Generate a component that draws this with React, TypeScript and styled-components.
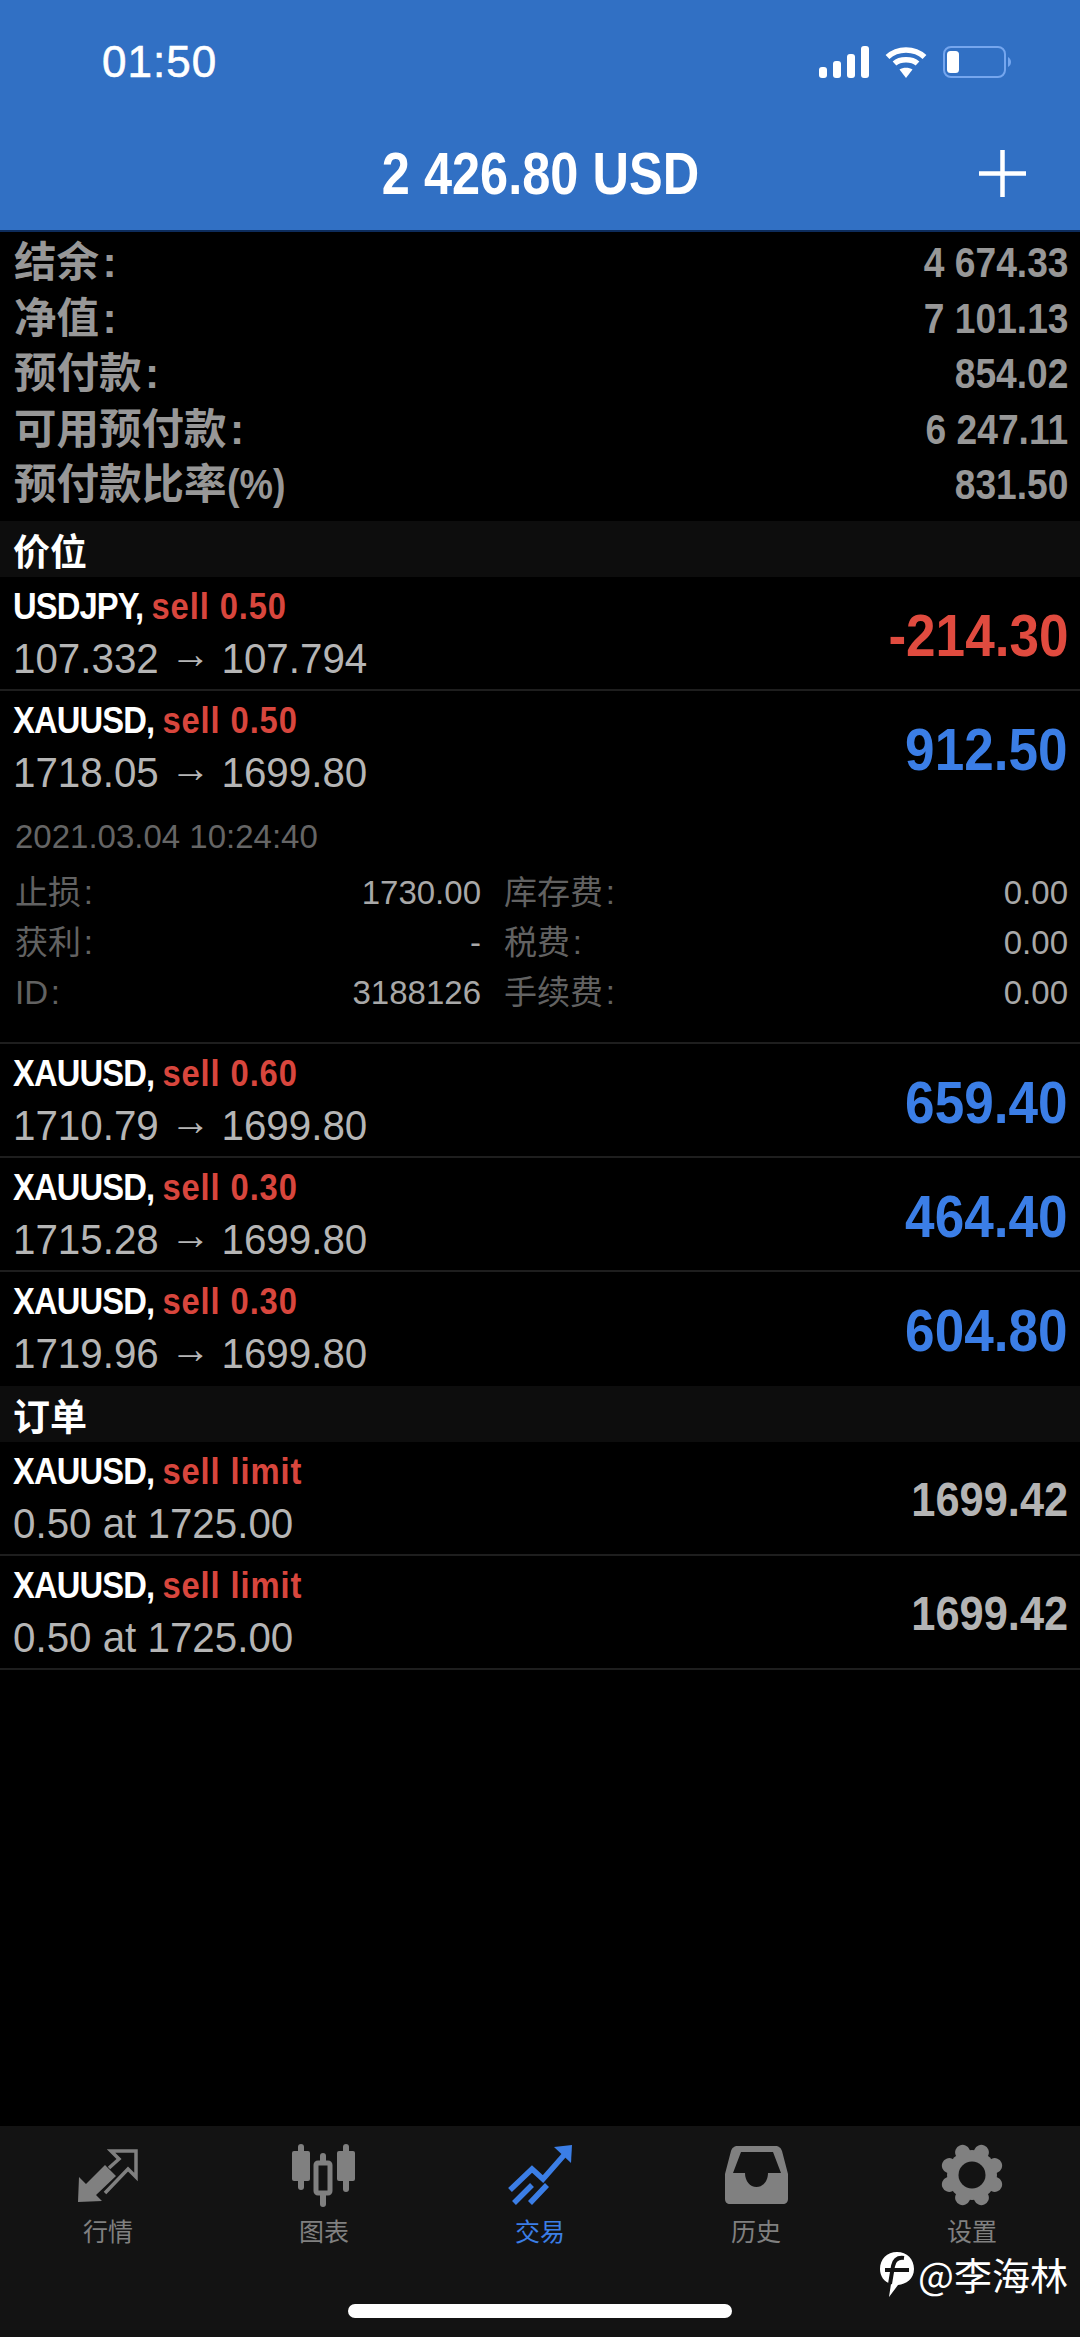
import * as React from 'react';
import styled, { createGlobalStyle } from 'styled-components';

const SANS = `'Liberation Sans', 'Noto Sans CJK SC', sans-serif`;
const CJK = `'Noto Sans CJK SC', sans-serif`;

const balances = [
  { label: '结余\u200A:', value: '4 674.33' },
  { label: '净值\u200A:', value: '7 101.13' },
  { label: '预付款\u200A:', value: '854.02' },
  { label: '可用预付款\u200A:', value: '6 247.11' },
  { label: '预付款比率', unit: '(%)', value: '831.50' },
];

const positions = [
  { symbol: 'USDJPY,', side: 'sell 0.50', from: '107.332', to: '107.794', value: '-214.30', tone: 'red', open: false },
  { symbol: 'XAUUSD,', side: 'sell 0.50', from: '1718.05', to: '1699.80', value: '912.50', tone: 'blue', open: true },
  { symbol: 'XAUUSD,', side: 'sell 0.60', from: '1710.79', to: '1699.80', value: '659.40', tone: 'blue', open: false },
  { symbol: 'XAUUSD,', side: 'sell 0.30', from: '1715.28', to: '1699.80', value: '464.40', tone: 'blue', open: false },
  { symbol: 'XAUUSD,', side: 'sell 0.30', from: '1719.96', to: '1699.80', value: '604.80', tone: 'blue', open: false },
];

const details = [
  ['止损\u200A:', '1730.00', '库存费\u200A:', '0.00'],
  ['获利\u200A:', '-', '税费\u200A:', '0.00'],
  ['ID\u200A:', '3188126', '手续费\u200A:', '0.00'],
];

const toneColors: Record<string, string> = {
  red: '#e04b3f',
  blue: '#3b7ee6',
  grey: '#b4b4b4',
};

const GlobalStyle = createGlobalStyle`
  html, body {
    margin: 0;
    padding: 0;
    background: #000;
  }
  * {
    box-sizing: border-box;
  }
`;

const Screen = styled.div`
  position: relative;
  display: flex;
  flex-direction: column;
  width: 1080px;
  height: 2337px;
  overflow: hidden;
  background: #000;
  font-family: ${SANS};
`;

const Header = styled.header`
  height: 232px;
  flex-shrink: 0;
  background: #3170c4;
  border-bottom: 2px solid #0d2c5c;
`;

const StatusBar = styled.div`
  display: flex;
  align-items: center;
  justify-content: space-between;
  height: 124px;
  padding: 0 69px 0 102px;
  color: #fff;
`;

const Clock = styled.span`
  font-size: 44px;
  letter-spacing: 1px;
  -webkit-text-stroke: 0.6px #fff;
`;

const StatusIcons = styled.div`
  display: flex;
  align-items: center;
  gap: 16px;
`;

const NavBar = styled.div`
  display: grid;
  grid-template-columns: 1fr auto 1fr;
  align-items: center;
  height: 106px;
  padding: 0 54px 7px;
  color: #fff;
`;

const NavTitle = styled.h1`
  grid-column: 2;
  margin: 0;
  font-size: 60px;
  font-weight: 700;
  white-space: nowrap;
  transform: scaleX(0.842);
`;

const NavAction = styled.div`
  justify-self: end;
  display: flex;
`;

const Content = styled.main`
  flex: 1;
`;

const BalanceList = styled.div`
  padding: 3px 12px 8px 14px;
`;

const BalanceRow = styled.div`
  display: flex;
  align-items: center;
  justify-content: space-between;
  height: 55.5px;
  line-height: 57px;
  color: #979797;
  font-weight: 700;
`;

const BalanceLabel = styled.span`
  font-size: 42.5px;
`;

const Unit = styled.span`
  display: inline-block;
  transform: scaleX(0.885);
  transform-origin: left center;
`;

const BalanceValue = styled.span`
  font-size: 42px;
  white-space: nowrap;
  transform: scaleX(0.885);
  transform-origin: right center;
`;

const SectionTitle = styled.div`
  display: flex;
  align-items: center;
  height: 56px;
  padding: 3px 0 0 13px;
  background: #0d0d0d;
  color: #fff;
  font-size: 37px;
  font-weight: 700;
`;

const Item = styled.div<{ $plain?: boolean }>`
  border-bottom: 2px solid ${p => (p.$plain ? 'transparent' : '#1e1e1e')};
`;

const ItemMain = styled.div`
  display: flex;
  align-items: center;
  justify-content: space-between;
  height: 112px;
  padding: 2px 12px 0 13px;
`;

const ItemText = styled.div`
  display: flex;
  flex-direction: column;
`;

const ItemTitle = styled.div`
  height: 52px;
  line-height: 54px;
  font-size: 37px;
  font-weight: 700;
  letter-spacing: -1px;
  color: #fff;
  white-space: nowrap;
  transform: scaleX(0.885);
  transform-origin: left center;
`;

const Side = styled.span`
  letter-spacing: 1px;
  color: #d8463d;
`;

const ItemPrice = styled.div`
  height: 56px;
  line-height: 54px;
  font-size: 42px;
  color: #b5b5b5;
  white-space: nowrap;
  transform: scaleX(0.96);
  transform-origin: left center;
`;

const Arrow = styled.span`
  line-height: 0;
  vertical-align: 5px;
`;

const ItemValue = styled.div<{ $tone: string; $size: number; $drop?: number }>`
  padding-top: ${p => p.$drop || 0}px;
  font-size: ${p => p.$size}px;
  font-weight: 700;
  color: ${p => toneColors[p.$tone]};
  white-space: nowrap;
  transform: scaleX(0.885);
  transform-origin: right center;
`;

const Detail = styled.div`
  padding: 0 12px 25px 15px;
`;

const DetailDate = styled.div`
  height: 64px;
  line-height: 68px;
  font-size: 33px;
  color: #656565;
`;

const DetailRow = styled.div`
  display: grid;
  grid-template-columns: 466px 1fr;
  column-gap: 23px;
  height: 50px;
  line-height: 52px;
  font-size: 33px;
`;

const DetailPair = styled.div`
  display: flex;
  justify-content: space-between;
`;

const DetailLabel = styled.span`
  color: #626262;
`;

const DetailValue = styled.span`
  color: #a8a8a8;
`;

const TabBar = styled.nav`
  flex-shrink: 0;
  height: 211px;
  padding-top: 17px;
  background: #131313;
`;

const Tabs = styled.div`
  display: grid;
  grid-template-columns: repeat(5, 1fr);
`;

const Tab = styled.div<{ $active?: boolean }>`
  display: flex;
  flex-direction: column;
  align-items: center;
  color: ${p => (p.$active ? '#3b7ee6' : '#808080')};
`;

const TabIcon = styled.div`
  display: flex;
  align-items: center;
  justify-content: center;
  height: 64px;
`;

const TabLabel = styled.span`
  margin-top: 8px;
  line-height: 30px;
  font-family: ${CJK};
  font-size: 25px;
`;

const HomeIndicator = styled.div`
  width: 384px;
  height: 14px;
  margin: 59px auto 0;
  border-radius: 7px;
  background: #fff;
`;

const Watermark = styled.div`
  position: absolute;
  right: 12px;
  bottom: 40px;
  display: flex;
  align-items: center;
  gap: 3px;
  color: #fff;
  font-family: ${CJK};
  font-size: 38px;
  line-height: 46px;
`;

const SignalIcon = () => (
  <svg width="50" height="32" viewBox="0 0 50 32" fill="#fff">
    <rect x="0" y="21" width="8" height="11" rx="3" />
    <rect x="14" y="15" width="8" height="17" rx="3" />
    <rect x="28" y="8" width="8" height="24" rx="3" />
    <rect x="42" y="0" width="8" height="32" rx="3" />
  </svg>
);

const WifiIcon = () => (
  <svg width="42" height="32" viewBox="0 0 42 32" fill="none" stroke="#fff" strokeWidth="5.5">
    <path d="M2.5 11 C12.5 1.5 29.5 1.5 39.5 11" />
    <path d="M9.5 17.5 C15 12.5 27 12.5 32.5 17.5" />
    <path d="M21 32 L14.5 23.5 C18 21 24 21 27.5 23.5 Z" fill="#fff" stroke="none" />
  </svg>
);

const BatteryIcon = () => (
  <svg width="68" height="32" viewBox="0 0 68 32" fill="none">
    <rect x="1" y="1" width="61" height="30" rx="7" stroke="#75a6ee" strokeWidth="2" />
    <rect x="4" y="5" width="12" height="22" rx="3.5" fill="#fff" />
    <path d="M65 11 C67 12 68 14 68 16 C68 18 67 20 65 21 Z" fill="#75a6ee" />
  </svg>
);

const PlusIcon = () => (
  <svg width="47" height="47" viewBox="0 0 47 47" stroke="#fff" strokeWidth="4.5">
    <path d="M23.5 0 V47 M0 23.5 H47" />
  </svg>
);

const QuotesIcon = () => (
  <svg width="60" height="54" viewBox="0 0 60 54" fill="#808080">
    <path d="M0 54 L1 29 L8 36 L27 17 L38 28 L18 47 L24 53 Z" />
    <path d="M31 20 L41 11 L33 3 H58 V29 L50 21 L27 45" fill="none" stroke="#808080" strokeWidth="3.5" />
  </svg>
);

const ChartIcon = () => (
  <svg width="66" height="63" viewBox="0 0 66 63" fill="#808080">
    <rect x="7" y="0" width="6" height="46" rx="3" />
    <rect x="1" y="7" width="18" height="30" rx="2" />
    <rect x="29" y="9" width="6" height="54" rx="3" />
    <rect x="25" y="19" width="14" height="30" rx="2" fill="#131313" stroke="#808080" strokeWidth="5" />
    <rect x="52" y="0" width="6" height="48" rx="3" />
    <rect x="46" y="7" width="18" height="30" rx="2" />
  </svg>
);

const TradeIcon = () => (
  <svg width="64" height="60" viewBox="0 0 64 60" fill="none" stroke="#3b7ee6" strokeWidth="5.5">
    <path d="M2 45 L24 24 L35 34 L57 9" />
    <path d="M46 2 L64 0 L63 18 Z" fill="#3b7ee6" stroke="none" />
    <path d="M6 58 L24 40 M22 58 L39 40" />
  </svg>
);

const HistoryIcon = () => (
  <svg width="63" height="58" viewBox="0 0 63 58">
    <path
      fillRule="evenodd"
      fill="#808080"
      d="M13 0 H50 C54 0 56 2 57 5 L63 28 V53 C63 56 61 58 58 58 H5 C2 58 0 56 0 53 V28 L6 5 C7 2 9 0 13 0 Z M16 6 L8 27 H20 C20 35 25 41 31.5 41 C38 41 43 35 43 27 H56 L48 6 Z"
    />
  </svg>
);

const SettingsIcon = () => (
  <svg width="64" height="64" viewBox="0 0 64 64" fill="#808080">
    <circle cx="32" cy="32" r="25" />
    {[0, 45, 90, 135, 180, 225, 270, 315].map(angle => (
      <circle key={angle} cx="32" cy="7.5" r="7.5" transform={`rotate(${angle + 22.5} 32 32)`} />
    ))}
    <circle cx="32" cy="32" r="13.5" fill="#131313" />
  </svg>
);

const LogoIcon = () => (
  <svg width="36" height="46" viewBox="0 0 36 46">
    <path d="M18 1 C28 1 35 8 35 18 C35 28 27 33 19 34 L10 46 L12 33 C5 31 1 25 1 18 C1 8 8 1 18 1 Z" fill="#fff" />
    <path d="M25 7 C18 6 15 10 14 15 L11 33 M6 19 H30" fill="none" stroke="#131313" strokeWidth="4" />
  </svg>
);

const tabs = [
  { label: '行情', icon: <QuotesIcon /> },
  { label: '图表', icon: <ChartIcon /> },
  { label: '交易', icon: <TradeIcon />, active: true },
  { label: '历史', icon: <HistoryIcon /> },
  { label: '设置', icon: <SettingsIcon /> },
];

export default function App() {
  return (
    <Screen>
      <GlobalStyle />
      <Header>
        <StatusBar>
          <Clock>01:50</Clock>
          <StatusIcons>
            <SignalIcon />
            <WifiIcon />
            <BatteryIcon />
          </StatusIcons>
        </StatusBar>
        <NavBar>
          <NavTitle>2 426.80 USD</NavTitle>
          <NavAction>
            <PlusIcon />
          </NavAction>
        </NavBar>
      </Header>

      <Content>
        <BalanceList>
          {balances.map(row => (
            <BalanceRow key={row.label}>
              <BalanceLabel>
                {row.label}
                {row.unit && <Unit>{row.unit}</Unit>}
              </BalanceLabel>
              <BalanceValue>{row.value}</BalanceValue>
            </BalanceRow>
          ))}
        </BalanceList>

        <SectionTitle>价位</SectionTitle>
        {positions.map((pos, i) => (
          <Item key={pos.from} $plain={i === positions.length - 1}>
            <ItemMain>
              <ItemText>
                <ItemTitle>
                  {pos.symbol} <Side>{pos.side}</Side>
                </ItemTitle>
                <ItemPrice>
                  {pos.from} <Arrow>→</Arrow> {pos.to}
                </ItemPrice>
              </ItemText>
              <ItemValue $tone={pos.tone} $size={60} $drop={3}>
                {pos.value}
              </ItemValue>
            </ItemMain>
            {pos.open && (
              <Detail>
                <DetailDate>2021.03.04 10:24:40</DetailDate>
                {details.map(row => (
                  <DetailRow key={row[0]}>
                    <DetailPair>
                      <DetailLabel>{row[0]}</DetailLabel>
                      <DetailValue>{row[1]}</DetailValue>
                    </DetailPair>
                    <DetailPair>
                      <DetailLabel>{row[2]}</DetailLabel>
                      <DetailValue>{row[3]}</DetailValue>
                    </DetailPair>
                  </DetailRow>
                ))}
              </Detail>
            )}
          </Item>
        ))}

        <SectionTitle>订单</SectionTitle>
        {[0, 1].map(i => (
          <Item key={i}>
            <ItemMain>
              <ItemText>
                <ItemTitle>
                  XAUUSD, <Side>sell limit</Side>
                </ItemTitle>
                <ItemPrice>0.50 at 1725.00</ItemPrice>
              </ItemText>
              <ItemValue $tone="grey" $size={49}>
                1699.42
              </ItemValue>
            </ItemMain>
          </Item>
        ))}
      </Content>

      <TabBar>
        <Tabs>
          {tabs.map(tab => (
            <Tab key={tab.label} $active={tab.active}>
              <TabIcon>{tab.icon}</TabIcon>
              <TabLabel>{tab.label}</TabLabel>
            </Tab>
          ))}
        </Tabs>
        <HomeIndicator />
      </TabBar>

      <Watermark>
        <LogoIcon />
        <span>@李海林</span>
      </Watermark>
    </Screen>
  );
}
